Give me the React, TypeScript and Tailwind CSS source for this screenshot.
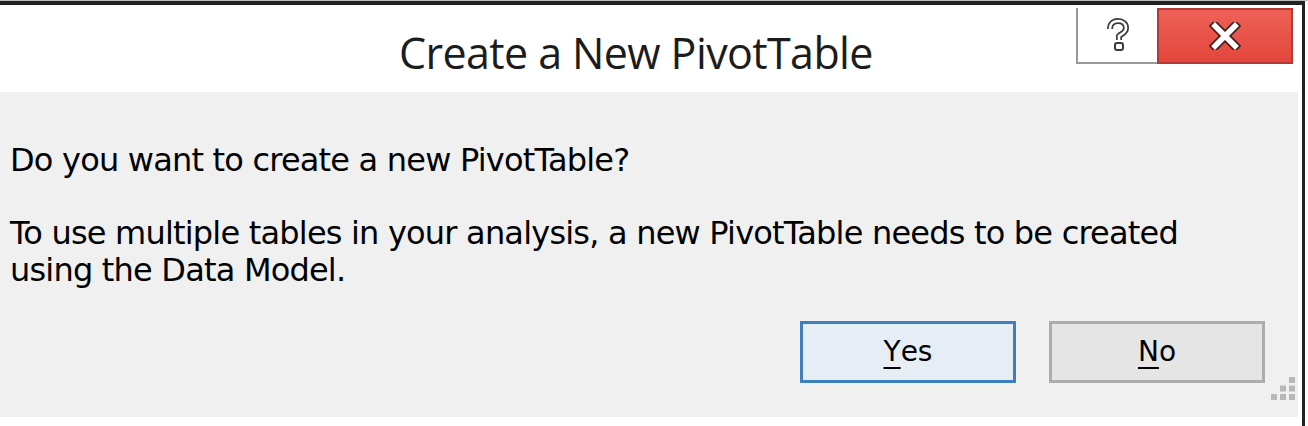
import React from 'react';

function HelpGlyph() {
  const d = 'M5 11 C5 5 9 3 13 3 C18 3 21 6 21 10 C21 15 16 16 14 18 L14 22';
  return (
    <svg width="26" height="34" viewBox="0 0 26 34" fill="none">
      <path d={d} stroke="#3a3a3a" strokeWidth="6" strokeLinejoin="round" />
      <path d={d} stroke="#fff" strokeWidth="2.6" strokeLinejoin="round" />
      <rect x="10" y="25" width="8" height="7" rx="2" stroke="#3a3a3a" strokeWidth="2" fill="#fff" />
    </svg>
  );
}

function CloseGlyph() {
  return (
    <svg width="32" height="28" viewBox="0 0 32 28">
      <path d="M6 4 L26 24 M26 4 L6 24" stroke="#4a1c1c" strokeWidth="9" strokeLinecap="square" />
      <path d="M6 4 L26 24 M26 4 L6 24" stroke="#fff" strokeWidth="5.5" strokeLinecap="square" />
    </svg>
  );
}

function Grip() {
  const dots = [
    [2, 0],
    [1, 1], [2, 1],
    [0, 2], [1, 2], [2, 2],
  ];
  return (
    <svg width="27" height="25" viewBox="0 0 27 25">
      {dots.map(([c, r]) => (
        <rect key={`${c}-${r}`} x={c * 9} y={r * 8.5} width="6" height="6" fill="#b8b8b8" />
      ))}
    </svg>
  );
}

export default function App() {
  return (
    <div
      className="w-[1308px] h-[426px] bg-white overflow-hidden"
      style={{ fontFamily: '"Noto Sans", "Open Sans", sans-serif' }}
    >
      <div className="h-[1px] bg-[#bdbdbd]" />
      <div className="flex h-[425px]">
        <div className="flex flex-col w-[1302px]">
          <div className="h-[4px] bg-[#222]" />
          {/* title bar */}
          <div className="flex h-[87px]">
            <div className="flex-1">
              <div
                className="pt-[22px] pl-[399px] text-[43px] leading-[52px] text-[#1c1c1c] tracking-[-0.6px]"
                style={{ fontFamily: '"Open Sans", "Noto Sans", sans-serif' }}
              >
                Create a New PivotTable
              </div>
            </div>
            <div className="flex items-start h-[59px] pt-[3px] pr-[9px]">
              <div className="w-[81px] h-[56px] border-l-2 border-b-2 border-[#9a9a9a] bg-white flex items-center justify-center">
                <HelpGlyph />
              </div>
              <div className="w-[136px] h-[56px] bg-gradient-to-b from-[#ee6157] to-[#e2463c] border-2 border-[#b33a36] flex items-center justify-center">
                <CloseGlyph />
              </div>
            </div>
          </div>
          {/* body */}
          <div className="flex h-[325px] pr-[9px]">
            <div
              className="flex-1 bg-[#f0f0f0] flex flex-col text-black"
              style={{ fontFamily: '"DejaVu Sans", "Liberation Sans", sans-serif' }}
            >
              <div className="pl-[10px] pt-[50px] text-[32px] leading-[37px] tracking-[-0.8px]">
                <p>Do you want to create a new PivotTable?</p>
                <p className="mt-[36px]">
                  To use multiple tables in your analysis, a new PivotTable needs to be created
                  <br />
                  using the Data Model.
                </p>
              </div>
              <div className="flex mt-[32px] pl-[800px] gap-[33px] items-start">
                <button className="w-[216px] h-[62px] border-[3px] border-[#3d7fbf] bg-[#e6edf4] text-[28px] flex items-center justify-center">
                  <span className="underline underline-offset-[6px] decoration-2">Y</span>es
                </button>
                <button className="w-[216px] h-[62px] border-[3px] border-[#adadad] bg-[#e5e5e5] text-[28px] flex items-center justify-center">
                  <span className="underline underline-offset-[6px] decoration-2">N</span>o
                </button>
                <div className="ml-[-27px] mt-[56px]">
                  <Grip />
                </div>
              </div>
            </div>
          </div>
          <div className="flex-1" />
        </div>
        <div className="w-[3px] bg-[#222]" />
        <div className="flex-1" />
      </div>
    </div>
  );
}
